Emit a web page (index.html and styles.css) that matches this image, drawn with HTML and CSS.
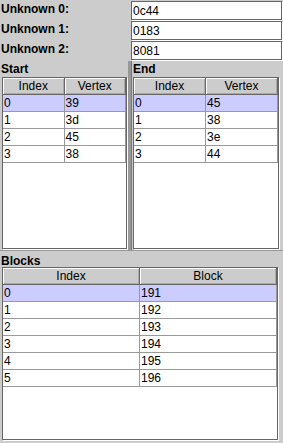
FILE: index.html
```html
<!DOCTYPE html>
<html lang="en">
<head>
    <meta charset="UTF-8">
    <title>Unknown Record</title>
    <link rel="stylesheet" href="styles.css">
</head>
<body>
    <!-- Header fields -->
    <div class="fields">
        <div class="field-row">
            <span class="field-label">Unknown 0:</span>
            <span class="field-input">0c44</span>
        </div>
        <div class="field-row">
            <span class="field-label">Unknown 1:</span>
            <span class="field-input">0183</span>
        </div>
        <div class="field-row">
            <span class="field-label">Unknown 2:</span>
            <span class="field-input">8081</span>
        </div>
    </div>

    <!-- Start / End split -->
    <div class="split">
        <section class="pane pane-start">
            <div class="pane-title">Start</div>
            <div class="scroll">
                <table class="grid">
                    <thead>
                        <tr><th>Index</th><th>Vertex</th></tr>
                    </thead>
                    <tbody>
                        <tr class="selected"><td>0</td><td>39</td></tr>
                        <tr><td>1</td><td>3d</td></tr>
                        <tr><td>2</td><td>45</td></tr>
                        <tr><td>3</td><td>38</td></tr>
                    </tbody>
                </table>
            </div>
        </section>
        <div class="divider"></div>
        <section class="pane pane-end">
            <div class="pane-title">End</div>
            <div class="scroll">
                <table class="grid">
                    <thead>
                        <tr><th>Index</th><th>Vertex</th></tr>
                    </thead>
                    <tbody>
                        <tr class="selected"><td>0</td><td>45</td></tr>
                        <tr><td>1</td><td>38</td></tr>
                        <tr><td>2</td><td>3e</td></tr>
                        <tr><td>3</td><td>44</td></tr>
                    </tbody>
                </table>
            </div>
        </section>
    </div>

    <!-- Blocks -->
    <section class="pane pane-blocks">
        <div class="pane-title">Blocks</div>
        <div class="scroll">
            <table class="grid">
                <thead>
                    <tr><th>Index</th><th>Block</th></tr>
                </thead>
                <tbody>
                    <tr class="selected"><td>0</td><td>191</td></tr>
                    <tr><td>1</td><td>192</td></tr>
                    <tr><td>2</td><td>193</td></tr>
                    <tr><td>3</td><td>194</td></tr>
                    <tr><td>4</td><td>195</td></tr>
                    <tr><td>5</td><td>196</td></tr>
                </tbody>
            </table>
        </div>
    </section>
</body>
</html>
```

FILE: styles.css
```css
/* General */
html, body {
    margin: 0;
    padding: 0;
}

body {
    width: 283px;
    height: 443px;
    background-color: #cccccc;
    color: #000;
    font-family: 'Liberation Sans', Arial, sans-serif;
    font-size: 12px;
    display: flex;
    flex-direction: column;
    overflow: hidden;
}

/* Fields */
.fields {
    height: 61px;
    padding-top: 1px;
    box-sizing: border-box;
}

.field-row {
    display: flex;
    align-items: flex-start;
    height: 20px;
}

.field-label {
    width: 131px;
    padding-left: 1px;
    box-sizing: border-box;
    font-weight: bold;
    line-height: 16px;
}

.field-input {
    width: 148px;
    height: 17px;
    line-height: 19px;
    padding-left: 1px;
    background-color: #fff;
    border: 1px solid #666;
    box-shadow: 1px 1px 0 #fff;
}

/* Panes */
.split {
    display: flex;
    height: 189px;
}

.pane {
    display: flex;
    flex-direction: column;
}

.pane-start {
    width: 128px;
}

.pane-start .scroll {
    margin: 0 1px 1px 2px;
}

.divider {
    width: 4px;
    background-color: #999;
    border-right: 1px solid #777;
    box-sizing: border-box;
}

.pane-end {
    flex: 1;
}

.pane-end .scroll {
    margin: 0 4px 1px 1px;
}

.pane-title {
    font-weight: bold;
    height: 16px;
    line-height: 16px;
    padding-left: 1px;
}

.scroll {
    flex: 1;
    background-color: #fff;
    border: 1px solid #666;
    box-shadow: 1px 1px 0 #fff;
    overflow: hidden;
}

.pane-blocks {
    flex: 1;
    border-top: 1px solid #999;
}

.pane-blocks .pane-title {
    height: 14px;
    padding-top: 2px;
}

.pane-blocks .scroll {
    margin: 0 5px 3px 2px;
}

/* Tables */
.grid {
    width: 100%;
    border-collapse: separate;
    border-spacing: 0;
    table-layout: fixed;
}

.grid th {
    height: 16px;
    padding: 0;
    font-weight: normal;
    line-height: 16px;
    text-align: center;
    background-color: #cccccc;
    border-right: 1px solid #666;
    border-bottom: 1px solid #666;
    box-shadow: inset 1px 1px 0 #fff, inset -1px -1px 0 #aaa;
}

.grid td {
    height: 15px;
    padding: 0 0 0 1px;
    line-height: 16px;
    border-bottom: 1px solid #999;
    border-right: 1px solid #999;
}

.grid tr.selected td {
    background-color: #ccccff;
}
```
